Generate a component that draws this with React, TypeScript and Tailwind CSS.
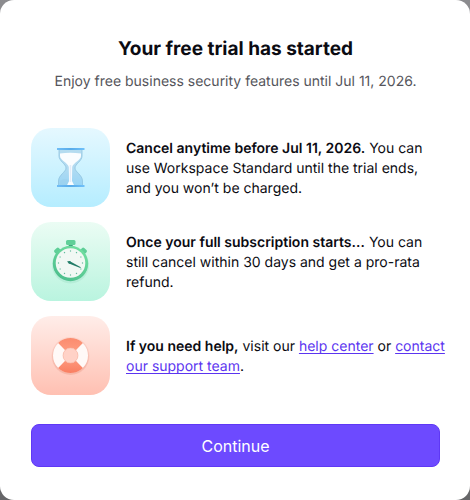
import type { ReactNode } from "react";

function Hourglass() {
  return (
    <svg viewBox="0 0 79 79" className="size-full" aria-hidden="true">
      <defs>
        <linearGradient id="hg-glass" x1="0" y1="0" x2="0" y2="1">
          <stop offset="0" stopColor="#b5dcf0" />
          <stop offset="0.5" stopColor="#b2dbf1" />
          <stop offset="1" stopColor="#98d5f6" />
        </linearGradient>
        <linearGradient id="hg-bar" x1="0" y1="0" x2="1" y2="0">
          <stop offset="0" stopColor="#70bdf6" />
          <stop offset="0.5" stopColor="#58abe9" />
          <stop offset="1" stopColor="#70c1fa" />
        </linearGradient>
      </defs>
      <path
        d="M28 21.5H51V28C51 33 44 36 44 40C44 44 51.5 47 51.5 53V57.5H27.5V53C27.5 47 35 44 35 40C35 36 28 33 28 28Z"
        fill="url(#hg-glass)"
        stroke="#8fc3df"
        strokeWidth="0.8"
      />
      <path
        d="M29 25.5Q39 24 50 25.5V28C50 32 42 35 41.2 39L41 53L43 57H36L38 53L37.8 39C37 35 29 32 29 28Z"
        fill="#fafdff"
      />
      <path d="M38.7 37H40.2V54H38.7Z" fill="#e2ecf8" />
      <path d="M29 53Q35 49 38 53L36 57H29Z" fill="#9bcdea" opacity="0.5" />
      <rect x="26" y="20" width="27.5" height="2" fill="url(#hg-bar)" />
      <rect x="26" y="57" width="27.5" height="2" fill="url(#hg-bar)" />
    </svg>
  );
}

const ticks = Array.from({ length: 12 }, (_, i) => i * 30);

function Stopwatch() {
  return (
    <svg viewBox="0 0 79 79" className="size-full" aria-hidden="true">
      <defs>
        <linearGradient id="sw-ring" x1="0.8" y1="0" x2="0.2" y2="1">
          <stop offset="0" stopColor="#72e0a1" />
          <stop offset="1" stopColor="#4bbd8c" />
        </linearGradient>
      </defs>
      <ellipse cx="39.5" cy="43" rx="18.5" ry="18.5" fill="#55b995" opacity="0.15" />
      <rect x="37.7" y="21" width="4" height="5" fill="#319974" />
      <g fill="#5fcf98">
        <rect x="35" y="18" width="9.5" height="5" rx="1.5" />
        <rect x="-3" y="-2" width="6" height="5" rx="1.5" transform="translate(26 28.5) rotate(-42)" />
        <rect x="-3" y="-2" width="6" height="5" rx="1.5" transform="translate(53 28.5) rotate(42)" />
      </g>
      <circle cx="39.5" cy="41.5" r="17.7" fill="url(#sw-ring)" />
      <circle cx="39.5" cy="41" r="14.8" fill="#f1f8f4" />
      {ticks.map((a) => (
        <circle
          key={a}
          cx="39.5"
          cy="29"
          r="0.7"
          fill="#66bd9f"
          transform={`rotate(${a} 39.5 41)`}
        />
      ))}
      <path d="M36 39.5L38.5 39L49.8 45.2L49.3 46.1L38 41.5Z" fill="#237b67" />
      <circle cx="38.7" cy="40.5" r="1.3" fill="#26806c" />
    </svg>
  );
}

function Lifebuoy() {
  return (
    <svg viewBox="0 0 79 79" className="size-full" aria-hidden="true">
      <defs>
        <linearGradient id="lb-red" x1="0" y1="0" x2="0" y2="1">
          <stop offset="0" stopColor="#fb8b6e" />
          <stop offset="0.5" stopColor="#ffa085" />
          <stop offset="1" stopColor="#f97e61" />
        </linearGradient>
      </defs>
      <circle cx="39.5" cy="40" r="19" fill="#dc765e" opacity="0.12" />
      <circle cx="39.5" cy="40.5" r="18.2" fill="#dc765e" opacity="0.15" />
      <circle cx="39.5" cy="39.5" r="12.5" fill="none" stroke="#fff9f7" strokeWidth="10" />
      <path
        d="M27.1 27.1A17.5 17.5 0 0 1 51.9 27.1L44.8 34.2A7.5 7.5 0 0 0 34.2 34.2ZM51.9 51.9A17.5 17.5 0 0 1 27.1 51.9L34.2 44.8A7.5 7.5 0 0 0 44.8 44.8Z"
        fill="url(#lb-red)"
      />
      <circle cx="39.5" cy="39.5" r="7.5" fill="#ffd2c7" stroke="#f6b5a3" strokeWidth="0.6" />
    </svg>
  );
}

function Row({ icon, tile, children }: { icon: ReactNode; tile: string; children: ReactNode }) {
  return (
    <li className="flex items-center gap-4">
      <div className={`size-[79px] shrink-0 overflow-hidden rounded-[20px] bg-linear-to-b ${tile}`}>
        {icon}
      </div>
      <p className="-mr-1.5 min-w-0 flex-1 pt-0.5 text-sm leading-5">{children}</p>
    </li>
  );
}

const link = "text-[#5b35f0] underline decoration-1 underline-offset-2 [text-decoration-skip-ink:none]";

export default function App() {
  return (
    <div className="min-h-screen bg-linear-to-b from-[#8c8c8f] to-[#666668] font-['Inter',sans-serif] [text-rendering:geometricPrecision]">
      <main className="flex min-h-screen flex-col rounded-[14px] bg-white pt-9 pr-[30px] pb-8 pl-[31px] text-[#0b0b12]">
        <header className="text-center">
          <h1 className="text-[19px] leading-[26px] font-bold">Your free trial has started</h1>
          <p className="mt-2 text-sm leading-6 text-[#55555b]">
            Enjoy free business security features until Jul 11, 2026.
          </p>
        </header>
        <ul className="mt-[34px] flex flex-col gap-[15px]">
          <Row icon={<Hourglass />} tile="from-[#e5f8ff] to-[#b5edff]">
            <strong className="font-semibold">Cancel anytime before Jul 11, 2026.</strong> You can use
            Workspace Standard until the trial ends, and you won’t be charged.
          </Row>
          <Row icon={<Stopwatch />} tile="from-[#ebfcf4] to-[#b9f4df]">
            <strong className="font-semibold">Once your full subscription starts…</strong> You can still
            cancel within 30 days and get a pro-rata refund.
          </Row>
          <Row icon={<Lifebuoy />} tile="from-[#ffede9] to-[#ffc0b2]">
            <strong className="font-semibold">If you need help,</strong> visit our{" "}
            <a href="#help" className={link}>help center</a> or{" "}
            <a href="#support" className={link}>contact our support team</a>.
          </Row>
        </ul>
        <button
          type="button"
          className="mt-[29px] h-[43px] w-full rounded-lg border border-[#5f38f5] bg-[#6d4aff] text-base text-white"
        >
          Continue
        </button>
      </main>
    </div>
  );
}
